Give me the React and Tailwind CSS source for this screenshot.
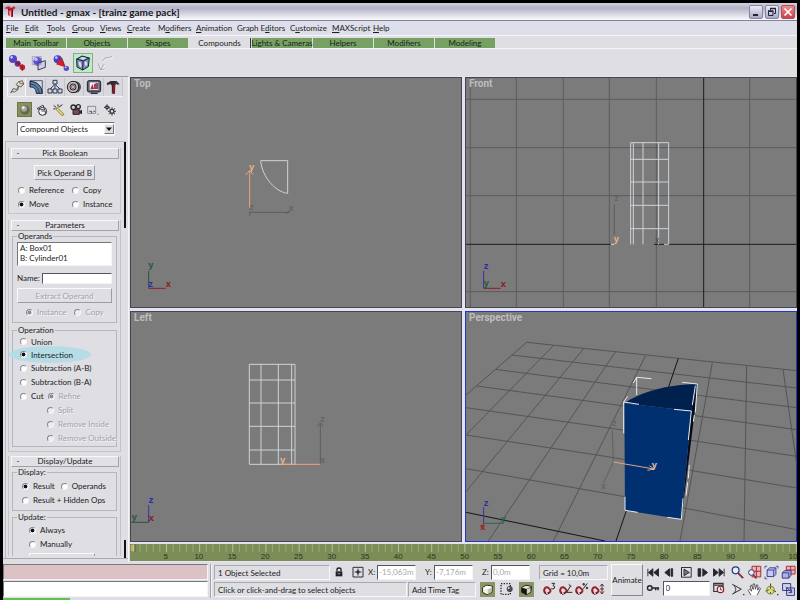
import React from "react";

/* ---------- shared controls ---------- */

function Radio({ label, name, checked = false, disabled = false, height = "h-[14px]" }) {
  return (
    <label
      className={`flex ${height} items-center gap-[4px] whitespace-nowrap ${
        disabled ? "text-[#a3a3ab] [text-shadow:1px_1px_0_#f4f4f8]" : "text-[#1c1c22]"
      }`}
    >
      <input
        type="radio"
        name={name}
        defaultChecked={checked}
        disabled={disabled}
        className="m-0 size-[7px] shrink-0 appearance-none rounded-full border border-t-[#85858d] border-l-[#85858d] border-r-[#f4f4f8] border-b-[#f4f4f8] bg-white checked:bg-[radial-gradient(circle,#111_0,#111_45%,#fff_65%)] disabled:bg-[#ececf1] disabled:checked:bg-[radial-gradient(circle,#8b8b93_0,#8b8b93_45%,#ececf1_65%)]"
      />
      {label}
    </label>
  );
}

function Rollout({ title, className = "", children }) {
  return (
    <section className={`mr-[3px] ml-[2px] border border-t-0 border-[#c3c3ca] ${className}`}>
      <button className="mx-[2px] grid h-[11px] w-[108px] grid-cols-[12px_1fr_12px] items-center border border-t-[#f8f8fb] border-l-[#f8f8fb] border-r-[#a2a2aa] border-b-[#a2a2aa] bg-[#e0e0e5]">
        <span className="leading-[9px]">-</span>
        <span className="text-center leading-[9px]">{title}</span>
      </button>
      {children}
    </section>
  );
}

function Group({ title, className = "", children }) {
  return (
    <fieldset className={`mx-[3px] min-w-0 border border-[#b6b6be] ${className}`}>
      <legend className="ml-[4px] px-[1px] leading-[10px]">{title}</legend>
      {children}
    </fieldset>
  );
}

function Icon({ size = "size-[16px]", children, className = "", box = "0 0 48 48" }) {
  return (
    <svg viewBox={box} className={`${size} shrink-0 ${className}`} fill="none" aria-hidden="true">
      {children}
    </svg>
  );
}

/* ---------- title, menu, tabs, toolbar ---------- */

function TitleBar() {
  const btn =
    "flex size-[14px] items-center justify-center rounded-[2px] border border-[#8484a4] bg-linear-to-b from-[#ececf6] to-[#a9a9c6]";
  return (
    <header className="flex h-[18px] items-center border-b border-[#83839e] bg-linear-to-b from-[#cfcfdd] via-[#b4b4c8] via-30% to-[#fafafc] pr-[2px] pl-[2px]">
      <Icon size="h-[14px] w-[12px]" box="0 0 36 42">
        <path d="M2 6L14 4L17 10L27 4L32 9L24 14L23 35L18 37L17 17L13 17L14 34L9 30L9 11L2 12Z" fill="#d3222b" />
        <path d="M17 10L23 14L22 35M9 12L14 15" stroke="#5c1218" strokeWidth="3" />
      </Icon>
      <h1 className="ml-[4px] text-[10px] leading-[14px] font-bold text-[#17171d]">
        Untitled - gmax - [trainz game pack]
      </h1>
      <div className="ml-auto flex gap-[2px]">
        <button aria-label="Minimize" className={btn}>
          <Icon size="size-[12px]" box="0 0 12 12"><path d="M3 9H8" stroke="#222238" strokeWidth="2" /></Icon>
        </button>
        <button aria-label="Restore" className={btn}>
          <Icon size="size-[12px]" box="0 0 12 12">
            <path d="M4.500 4V2.500H9.500V7.500H8M2.500 5.500H7V9.500H2.500Z" stroke="#222238" />
            <path d="M4 2.500H10M2 5H7.500" stroke="#222238" strokeWidth="1.500" />
          </Icon>
        </button>
        <button
          aria-label="Close"
          className="flex size-[14px] items-center justify-center rounded-[2px] border border-[#a4555f] bg-linear-to-b from-[#f08a8a] to-[#c8404c]"
        >
          <Icon size="size-[12px]" box="0 0 12 12"><path d="M2.500 2.500L9.500 9.500M9.500 2.500L2.500 9.500" stroke="#fff" strokeWidth="1.700" /></Icon>
        </button>
      </div>
    </header>
  );
}

const menus = [
  ["", "F", "ile", "w-[19px]"],
  ["", "E", "dit", "w-[22px]"],
  ["", "T", "ools", "w-[25px]"],
  ["", "G", "roup", "w-[28px]"],
  ["", "V", "iews", "w-[27px]"],
  ["", "C", "reate", "w-[31px]"],
  ["M", "o", "difiers", "w-[38px]"],
  ["", "A", "nimation", "w-[41px]"],
  ["Graph E", "d", "itors", "w-[53px]"],
  ["C", "u", "stomize", "w-[42px]"],
  ["", "M", "AXScript", "w-[41px]"],
  ["", "H", "elp", "w-[20px]"],
];

function MenuBar() {
  return (
    <nav className="flex h-[15px] items-center border-b border-[#f6f6fa] bg-[#dddfea] pl-[3px]">
      {menus.map(([a, u, b, w]) => (
        <button key={a + u + b} className={`${w} text-left whitespace-nowrap`}>
          {a}
          <span className="underline">{u}</span>
          {b}
        </button>
      ))}
    </nav>
  );
}

const tabs = ["Main Toolbar", "Objects", "Shapes", "Compounds", "Lights & Cameras", "Helpers", "Modifiers", "Modeling"];

function TabBar() {
  return (
    <div role="tablist" className="flex h-[13px] items-end gap-[1px] border-b border-[#f6f6fa] pl-[3px]">
      {tabs.map((t) => (
        <button
          key={t}
          role="tab"
          aria-selected={t === "Compounds"}
          className={`flex h-[10px] items-center justify-center leading-[10px] whitespace-nowrap ${
            t === "Compounds" ? "w-[62px] border-r border-[#34343a]" : "w-[60px] bg-[#77a163]"
          }`}
        >
          {t}
        </button>
      ))}
    </div>
  );
}

function Toolbar() {
  const b = "flex size-[20px] items-center justify-center";
  return (
    <div className="flex h-[27px] items-center gap-[2px] pl-[4px]">
      <button aria-label="Morph" className={b}>
        <Icon size="size-[18px]" box="0 0 54 54">
          <circle cx="15" cy="15" r="12" fill="#5046c4" /><circle cx="11" cy="10" r="4" fill="#c8c4fa" />
          <circle cx="29" cy="29" r="9" fill="#8a2c86" /><path d="M22 26L31 21L38 28L30 35Z" fill="#6d2360" />
          <path d="M35 34L43 30L51 35V45L43 50L35 44Z" fill="#c3222d" /><path d="M35 34L43 38V50" stroke="#6c1018" strokeWidth="2" />
        </Icon>
      </button>
      <button aria-label="Scatter" className={b}>
        <Icon size="size-[18px]" box="0 0 54 54">
          <circle cx="23" cy="22" r="13" fill="#5f54d0" /><circle cx="18" cy="16" r="5" fill="#c9c5fb" />
          <path d="M7 8H34V32H7Z" stroke="#8a88b8" strokeWidth="2" />
          <path d="M24 27L46 20V40L24 48Z" fill="#c8c4ee" fillOpacity=".5" stroke="#24243a" strokeWidth="2.500" />
        </Icon>
      </button>
      <button aria-label="Connect" className={b}>
        <Icon size="size-[18px]" box="0 0 54 54">
          <circle cx="17" cy="16" r="12" fill="#4a3fc0" /><circle cx="13" cy="11" r="4" fill="#c8c4fa" />
          <path d="M29 11L40 40L12 31Z" fill="#d0202b" /><path d="M29 11L40 40" stroke="#551018" strokeWidth="2" />
          <circle cx="43" cy="43" r="8" fill="#5548c8" /><circle cx="41" cy="40" r="3" fill="#c8c4fa" />
        </Icon>
      </button>
      <button aria-label="Boolean" className={`${b} border border-[#8fa896] bg-[#b8efc0]`}>
        <Icon size="size-[18px]" box="0 0 54 54">
          <path d="M8 15L24 6L46 12L43 38L26 48L9 39Z" fill="#8890bc" stroke="#1d1e3c" strokeWidth="3" />
          <path d="M8 15L27 21L26 48M27 21L46 12" stroke="#1d1e3c" strokeWidth="3" />
          <path d="M14 23Q23 22 22 39Q14 38 14 23ZM32 24Q40 18 39 33Q33 40 32 24Z" fill="#d9e6f2" />
          <path d="M17 13L27 9L37 13L27 17Z" fill="#d9e6f2" />
        </Icon>
      </button>
      <button aria-label="ShapeMerge" className={b} disabled>
        <Icon size="size-[18px]" box="0 0 54 54">
          <path d="M20 21C30 4 35 17 49 6M6 28L14 47L24 31M14 47L26 45" stroke="#fff" strokeWidth="3" transform="translate(2 2)" />
          <path d="M20 21C30 4 35 17 49 6M6 28L14 47L24 31M14 47L26 45" stroke="#a5a5ad" strokeWidth="3" />
        </Icon>
      </button>
    </div>
  );
}

/* ---------- command panel ---------- */

const panelTabs = [
  ["Create", <path key="p" d="M5 42L12 29L24 31L28 21L21 17L29 8L40 5L44 15L36 24L29 21L27 32L17 39L9 38ZM29 8L36 14L44 15" fill="#dad5b4" stroke="#55554f" strokeWidth="2.500" />],
  ["Modify", <g key="p"><path d="M6 7C28 7 42 23 43 43H25C24 29 18 24 6 24Z" fill="#5a82aa" stroke="#16223c" strokeWidth="3" /><path d="M6 15C21 16 32 25 34 43M5 5H43V43" stroke="#16223c" strokeWidth="2" /></g>],
  ["Hierarchy", <path key="p" d="M18 4H30V15H18ZM3 30H15V42H3ZM18 30H30V42H18ZM33 30H45V42H33ZM24 15V30M22 18L9 30M26 18L39 30" stroke="#2f3a54" strokeWidth="3" />],
  ["Motion", <g key="p"><circle cx="27" cy="24" r="18" fill="#4c4a4d" /><circle cx="21" cy="24" r="17" fill="#bcb8bc" stroke="#252528" strokeWidth="3" /><circle cx="21" cy="24" r="9" fill="#72595d" stroke="#2c2428" strokeWidth="3" /><path d="M21 15V33M12 24H30M15 18L27 30M27 18L15 30" stroke="#e2d9dc" strokeWidth="1.500" /></g>],
  ["Display", <g key="p"><rect x="4" y="5" width="40" height="34" rx="5" fill="#5d6474" stroke="#20222c" strokeWidth="3" /><path d="M11 10H37V33H11Z" fill="#f3eff2" /><path d="M13 31L19 15L24 31Z" fill="#b9202b" /><path d="M25 16L35 13V29H25Z" fill="#c03b44" stroke="#342a72" strokeWidth="2" /><path d="M14 43H35" stroke="#2a2c35" strokeWidth="4" /></g>],
  ["Utilities", <g key="p"><path d="M5 13L17 6H34L44 16L37 17L32 13V18H17V14L7 19Z" fill="#2f2c32" /><path d="M20 17H31L30 45H23Z" fill="#8b1d25" /><path d="M22 18V43" stroke="#302327" strokeWidth="3" /></g>],
];

const categories = [
  ["Geometry", <g key="c"><circle cx="21" cy="21" r="14" fill="#62665d" /><circle cx="18" cy="17" r="9" fill="#a3a79c" /><circle cx="16" cy="14" r="4" fill="#f2f2ee" /></g>],
  ["Shapes", <g key="c"><circle cx="23" cy="25" r="12" fill="#f6f6f8" stroke="#303036" strokeWidth="3" /><path d="M6 17L24 6L29 21Z M19 24H31V34" stroke="#303036" strokeWidth="2.500" /></g>],
  ["Lights", <g key="c"><path d="M16 14L36 34L30 38L12 19Z" fill="#ede057" stroke="#554f32" strokeWidth="2" /><path d="M5 7L13 14M18 4V11M4 18L10 17M20 13L31 5" stroke="#29292e" strokeWidth="3" /></g>],
  ["Cameras", <g key="c"><circle cx="13" cy="13" r="7" fill="#d2d0d2" stroke="#29292e" strokeWidth="4" /><circle cx="28" cy="11" r="6" fill="#d2d0d2" stroke="#29292e" strokeWidth="4" /><path d="M12 20H31V34H12Z" fill="#7c4d51" stroke="#242429" strokeWidth="3" /><path d="M31 24L39 20V34L31 30" fill="#242429" /></g>],
  ["Helpers", <g key="c"><path d="M5 10H29V31H5ZM34 34H39" stroke="#7e7e89" strokeWidth="2.500" /><path d="M10 25H17V31M22 25H27" stroke="#73414b" strokeWidth="3" /></g>],
  ["Systems", <g key="c" stroke="#303036"><circle cx="12" cy="13" r="4" strokeWidth="4" /><circle cx="27" cy="25" r="6" strokeWidth="4" /><path d="M12 4V8M12 18V22M3 13H7M17 13H21M27 13V18M27 32V38M15 25H20M34 25H39M18 16L22 20M32 30L36 34M36 16L32 20M22 30L18 34" strokeWidth="3" /></g>],
];

function CommandPanel() {
  return (
    <aside className="flex w-[126px] shrink-0 flex-col border-t border-r border-t-[#9a9aa4] border-r-[#f5f5f8]">
      <div role="tablist" className="mr-[5px] ml-[4px] flex h-[20px] border-b border-[#f4f4f8] pt-[1px]">
        {panelTabs.map(([name, art], i) => (
          <button
            key={name}
            role="tab"
            aria-label={name}
            aria-selected={i === 0}
            className={`flex h-[18px] w-[20px] items-center justify-center border-r ${
              i === 0 ? "border-l border-[#fafafd]" : "border-[#c4c4cb] bg-[#d8d8de]"
            }`}
          >
            <Icon>{art}</Icon>
          </button>
        ))}
      </div>
      <div className="mt-[5px] ml-[14px] flex gap-[2px]">
        {categories.map(([name, art], i) => (
          <button
            key={name}
            aria-label={name}
            className={`flex size-[15px] items-center justify-center ${i === 0 ? "border border-[#6d7448] bg-[#88915a]" : ""}`}
          >
            <Icon size="size-[14px]" box="0 0 42 42">{art}</Icon>
          </button>
        ))}
      </div>
      <div className="mt-[5px] ml-[14px] grid w-[98px] grid-cols-1 items-center border border-t-[#75757d] border-l-[#75757d] border-r-[#f4f4f8] border-b-[#f4f4f8] bg-white">
        <select aria-label="Object type" className="col-start-1 row-start-1 h-[12px] w-full appearance-none pl-[2px] leading-[12px]">
          <option>Compound Objects</option>
        </select>
        <span className="pointer-events-none col-start-1 row-start-1 flex h-[10px] w-[10px] items-center justify-center justify-self-end border border-t-[#f8f8fb] border-l-[#f8f8fb] border-r-[#76767e] border-b-[#76767e] bg-[#dedee3]">
          <Icon size="size-[6px]" box="0 0 6 6"><path d="M0 1.500H6L3 5Z" fill="#111" /></Icon>
        </span>
      </div>

      <div className="mt-[5px] mr-[2px] ml-[2px] flex min-h-0 flex-1 border-t border-l border-[#b9b9c1]">
        <div className="w-[118px] overflow-hidden pt-[6px]">
          <Rollout title="Pick Boolean" className="h-[66px]">
            <div className="flex justify-center pt-[6px]">
              <button className="h-[15px] w-[61px] border border-t-[#fafafd] border-l-[#fafafd] border-r-[#9c9ca4] border-b-[#9c9ca4]">
                Pick Operand B
              </button>
            </div>
            <div className="mt-[3px] grid grid-cols-[54px_1fr] pl-[9px]">
              <Radio name="pick" label="Reference" />
              <Radio name="pick" label="Copy" />
              <Radio name="pick" label="Move" checked />
              <Radio name="pick" label="Instance" />
            </div>
          </Rollout>

          <Rollout title="Parameters" className="mt-[6px] h-[232px]">
            <Group title="Operands" className="h-[92px]">
              <ul className="mx-[4px] mt-[1px] h-[24px] border border-t-[#75757d] border-l-[#75757d] border-r-[#f4f4f8] border-b-[#f4f4f8] bg-white pl-[2px]">
                <li className="leading-[10px]">A: Box01</li>
                <li className="leading-[10px]">B: Cylinder01</li>
              </ul>
              <label className="mx-[4px] mt-[6px] flex h-[12px] items-center gap-[2px]">
                Name:
                <input className="h-[11px] min-w-0 flex-1 border border-t-[#55555d] border-l-[#55555d] border-r-[#f4f4f8] border-b-[#f4f4f8] bg-white" />
              </label>
              <div className="mx-[4px] mt-[4px] flex">
                <button
                  disabled
                  className="h-[15px] flex-1 border border-t-[#fafafd] border-l-[#fafafd] border-r-[#9c9ca4] border-b-[#9c9ca4] text-[#a3a3ab] [text-shadow:1px_1px_0_#f4f4f8]"
                >
                  Extract Operand
                </button>
              </div>
              <div className="mt-[2px] flex gap-[8px] pl-[13px]">
                <Radio name="extract" label="Instance" checked disabled />
                <Radio name="extract" label="Copy" disabled />
              </div>
            </Group>
            <Group title="Operation" className="mt-[2px] h-[122px]">
              <div className="pl-[7px]">
                <Radio name="op" label="Union" height="h-[13px]" />
                <div className="-ml-[9px] w-[78px] rounded-[50%] bg-[#b6dce6] pl-[9px] shadow-[0_0_0_2px_#b6dce6]">
                  <Radio name="op" label="Intersection" checked height="h-[13px]" />
                </div>
                <Radio name="op" label="Subtraction (A-B)" />
                <Radio name="op" label="Subtraction (B-A)" />
                <div className="flex gap-[4px]">
                  <Radio name="op" label="Cut" />
                  <Radio name="cut" label="Refine" checked disabled />
                </div>
                <div className="pl-[27px]">
                  <Radio name="cut" label="Split" disabled />
                  <Radio name="cut" label="Remove Inside" disabled />
                  <Radio name="cut" label="Remove Outside" disabled />
                </div>
              </div>
            </Group>
          </Rollout>

          <Rollout title="Display/Update" className="mt-[4px] border-b-0">
            <Group title="Display:" className="h-[44px]">
              <div className="pt-[2px] pl-[9px]">
                <div className="flex gap-[6px]">
                  <Radio name="disp" label="Result" checked />
                  <Radio name="disp" label="Operands" />
                </div>
                <Radio name="disp" label="Result + Hidden Ops" />
              </div>
            </Group>
            <Group title="Update:" className="mt-[1px] border-b-0">
              <div className="pt-[1px] pl-[16px]">
                <Radio name="upd" label="Always" checked />
                <Radio name="upd" label="Manually" />
                <div className="mt-[2px] h-[3px] w-[66px] border border-b-0 border-t-[#fafafd] border-l-[#fafafd] border-r-[#9c9ca4]" />
              </div>
            </Group>
          </Rollout>
        </div>
        <div className="flex w-[2px] flex-col justify-between">
          <div className="h-[86px] bg-[#111114]" />
          <div className="h-[18px] bg-[#111114]" />
        </div>
      </div>
      <div className="h-[4px] border-t border-[#a9a9b1]" />
    </aside>
  );
}

/* ---------- viewports ---------- */

function Viewport({ title, box, active = false, children }) {
  return (
    <section
      className={`grid min-h-0 min-w-0 overflow-hidden border bg-[#7b7b7b] ${active ? "border-[#2536c4]" : "border-[#45454f]"}`}
    >
      <h2 className="z-10 col-start-1 row-start-1 h-[12px] pl-[3px] font-['Roboto'] text-[10px] leading-[12px] font-bold text-[#bebebe]">
        {title}
      </h2>
      <svg
        viewBox={box}
        preserveAspectRatio="xMidYMid slice"
        className="col-start-1 row-start-1 h-full w-full [&_line]:[vector-effect:non-scaling-stroke] [&_path]:[vector-effect:non-scaling-stroke]"
        fill="none"
        fontFamily="Liberation Sans"
        fontSize="28"
        fontWeight="bold"
      >
        {children}
      </svg>
    </section>
  );
}

function TopView() {
  return (
    <Viewport title="Top" box="3 9 990 687">
      <path d="M392 257H473V355C440 352 397 310 392 257Z" stroke="#cdd3d8" />
      <path d="M359 422V412H479M470 417L482 403" stroke="#5c5c5c" />
      <text x="358" y="406" fill="#5c5c5c" fontWeight="normal">z</text>
      <text x="476" y="409" fill="#5c5c5c" fontWeight="normal">x</text>
      <path d="M359 398V290M347 300L359 286L370 299" stroke="#efa27c" />
      <text x="357" y="284" fill="#f3b08e">y</text>
      <path d="M56 640V588" stroke="#1f5a35" />
      <path d="M56 640H107" stroke="#8b2028" />
      <text x="55" y="580" fill="#1f5a35">y</text>
      <text x="55" y="635" fill="#2d2da8">z</text>
      <text x="107" y="635" fill="#8b1820">x</text>
    </Viewport>
  );
}

function FrontView() {
  return (
    <Viewport title="Front" box="18 9 990 687">
      <path
        d="M31 9V696M169 9V696M310 9V696M448 9V696M589 9V696M869 9V696M18 73H1010M18 218H1010M18 362H1010M18 650H1010"
        stroke="#5c5c5c"
      />
      <path d="M731 9V696M18 508H452M582 508H1010" stroke="#1d1d1d" />
      <path
        d="M512 508V203H626V508M520 203V508M549 203V508M596 203V508M512 253H626M512 321H626M512 391H626M512 461H626M612 508H626"
        stroke="#cdd3d8"
      />
      <path d="M463 480V388" stroke="#5c5c5c" />
      <text x="463" y="377" fill="#5c5c5c" fontWeight="normal">z</text>
      <text x="585" y="504" fill="#4a4a4a" fontWeight="normal">x</text>
      <text x="461" y="501" fill="#f3b08e">y</text>
      <path d="M453 508H463" stroke="#efd0bd" />
      <path d="M71 640V588" stroke="#3434a4" />
      <path d="M71 640H122" stroke="#8b2028" />
      <text x="71" y="581" fill="#2d2da8">z</text>
      <text x="71" y="634" fill="#1f5a35">y</text>
      <text x="122" y="635" fill="#8b1820">x</text>
    </Viewport>
  );
}

function LeftView() {
  return (
    <Viewport title="Left" box="3 711 990 687">
      <path
        d="M358 868H495V1168H358ZM393 868V1168M445 868V1168M485 868V1168M358 915H495M358 984H495M358 1054H495M358 1125H495"
        stroke="#cdd3d8"
      />
      <path d="M571 1166V1046M562 1054L571 1044L580 1054" stroke="#5c5c5c" />
      <text x="571" y="1040" fill="#5c5c5c" fontWeight="normal">z</text>
      <text x="571" y="1165" fill="#5c5c5c" fontWeight="normal">x</text>
      <path d="M448 1168H571" stroke="#f0a079" />
      <text x="450" y="1164" fill="#f3b08e">y</text>
      <path d="M56 1342V1290" stroke="#3434a4" />
      <path d="M56 1342H5" stroke="#1f5a35" />
      <text x="56" y="1284" fill="#2d2da8">z</text>
      <text x="56" y="1337" fill="#8b1820">x</text>
      <text x="5" y="1336" fill="#1f5a35">y</text>
    </Viewport>
  );
}

function PerspectiveView() {
  return (
    <Viewport title="Perspective" box="18 21 990 687" active>
      <path
        d="M200 112L655 160L1010 197M155 150L645 207L1010 249M105 193L620 259L1010 308M50 243L500 304L1010 374M18 308L460 371L1010 454M18 390L430 453L1010 549M18 491L500 576L1010 674M200 112L18 270M280 122L20 388M371 131L18 560M466 141L85 708M557 151L280 708M757 173L660 708M860 183L852 708M969 193L1009 470"
        stroke="#555"
      />
      <path d="M655 160L468 708M18 622L435 708" stroke="#151515" />
      <path d="M694 318L712 238L703 330L664 643Z" fill="#050b1a" />
      <path d="M493 295C540 262 620 238 712 238L694 318Z" fill="#00204e" />
      <path d="M493 295L694 318L664 643L495 616Z" fill="#00306f" />
      <path
        d="M530 270V217L574 221M530 217L520 234M491 385V291L503 274M491 291L537 298M667 232L712 237L706 322M642 313L694 318L685 405M706 242L697 300M495 575V616L533 622M664 643L622 637M664 643L669 580M703 330L700 350M688 480L685 520M683 532L678 572"
        stroke="#e6e9ee"
      />
      <path d="M457 375L460 471L430 535" stroke="#606060" />
      <text x="457" y="364" fill="#5c5c5c" fontWeight="normal">z</text>
      <text x="423" y="551" fill="#5c5c5c" fontWeight="normal">x</text>
      <path d="M460 471L582 492M568 482L582 492L562 496" stroke="#dfa284" />
      <text x="575" y="490" fill="#f2c3ad">y</text>
      <path d="M71 655V607" stroke="#3434a4" />
      <path d="M71 655H122" stroke="#1f6a45" />
      <path d="M71 655L62 668" stroke="#a02028" />
      <text x="71" y="603" fill="#2d2da8">z</text>
      <text x="122" y="650" fill="#1f6a45">y</text>
      <text x="61" y="676" fill="#a01820">x</text>
    </Viewport>
  );
}

function Timeline() {
  const ticks = Array.from({ length: 101 }, (_, i) => i);
  const labels = Array.from({ length: 19 }, (_, i) => (i + 1) * 5);
  return (
    <div className="flex h-[17px] flex-col bg-[#7c8d58] text-[#2e3521]">
      <svg className="h-[8px] w-full shrink-0" aria-hidden="true">
        <rect x="0" y="0" width="5" height="8" fill="#b9b56a" stroke="#5f6136" />
        {ticks.map((i) => (
          <line key={i} x1={`${0.5 + i * 0.994}%`} x2={`${0.5 + i * 0.994}%`} y1="0" y2="8" stroke={i % 5 ? "#9ba979" : "#b7c196"} />
        ))}
      </svg>
      <div className="flex overflow-hidden pl-[19px] font-['Liberation_Sans'] text-[8px] leading-[9px]">
        {labels.map((n) => (
          <span key={n} className="min-w-0 flex-1 text-center">{n}</span>
        ))}
        <span className="min-w-0 flex-[0.5]">
          <span className="block pl-[8px]">10</span>
        </span>
      </div>
    </div>
  );
}

/* ---------- status bar ---------- */

const sunken = "border border-t-[#a9a9b2] border-l-[#a9a9b2] border-r-[#f8f8fb] border-b-[#f8f8fb]";

function Coord({ axis, value }) {
  return (
    <label className="flex items-center gap-[1px]">
      <span className="w-[8px]">{axis}:</span>
      <input
        defaultValue={value}
        className="h-[15px] w-[39px] border border-t-[#55555d] border-l-[#55555d] border-r-[#f4f4f8] border-b-[#f4f4f8] bg-white pl-[1px] text-[#a8a8b0]"
      />
    </label>
  );
}

function Magnet({ name, children }) {
  return (
    <button aria-label={name}>
      <Icon>
        <path d="M11 37C2 29 8 17 17 19L22 23M17 37C28 34 27 27 22 23" stroke="#9f1f29" strokeWidth="6" />
        <path d="M9 36L15 41M17 40L23 35" stroke="#2b1c20" strokeWidth="3" />
        {children}
      </Icon>
    </button>
  );
}

const playback = [
  ["Go to start", "M6 12V36M22 12V36L8 24ZM40 12V36L25 24Z"],
  ["Previous frame", "M24 12V36L9 24ZM29 12V36H34V12Z"],
  ["Play", "M8 8H39V39H8ZM8 8V39"],
  ["Next frame", "M25 12V36L40 24ZM10 12V36H18V12Z"],
  ["Go to end", "M42 12V36M26 12V36L40 24ZM8 12V36L23 24Z"],
];

function Cube({ light = false }) {
  return (
    <Icon size="size-[13px]" box="0 0 42 42">
      <path d="M5 15L19 7L37 11L35 30L20 38L5 30Z" fill={light ? "#f4f2e8" : "#15170f"} stroke="#24261c" strokeWidth="3" />
      <path d="M6 15L19 9L36 12L22 19Z" fill={light ? "#fff" : "#e7e7de"} />
      <path d="M22 20L34 15V29L22 36Z" fill={light ? "#c2c2b0" : "#d5d7c8"} />
    </Icon>
  );
}

const navigation = [
  ["Zoom", <g key="n"><circle cx="18" cy="17" r="11" fill="#e7eefb" stroke="#24387c" strokeWidth="4" /><path d="M26 26L42 42" stroke="#882b38" strokeWidth="6" /></g>],
  ["Zoom All", <g key="n"><path d="M16 4H44V38H16ZM30 4V38M16 20H44" fill="#e9b5b8" stroke="#a52630" strokeWidth="3" /><circle cx="14" cy="24" r="9" fill="#eef" stroke="#30305c" strokeWidth="3" /><path d="M20 31L30 43" stroke="#8d2f3b" strokeWidth="5" /></g>],
  ["Zoom Extents", <g key="n"><path d="M10 16L18 9H38V30L31 37H10ZM10 16H31V37M31 16L38 9" fill="#c6c8ef" stroke="#343b98" strokeWidth="3" /><path d="M3 11V4H10M38 4H45V11M3 37V44H10" stroke="#343b98" strokeWidth="2.500" /></g>],
  ["Zoom Extents All", <g key="n"><path d="M17 4H45V29H17ZM31 4V29M17 16H45" fill="#e9b5b8" stroke="#a52630" strokeWidth="3" /><path d="M4 25L12 18H32V33L25 42H4ZM4 25H25V42" fill="#aeb1e5" stroke="#343b88" strokeWidth="3" /></g>],
  ["Field of View", <g key="n"><path d="M7 7L36 23L7 39M13 12C20 20 20 28 13 35" stroke="#242429" strokeWidth="3" /><path d="M42 40H46" stroke="#242429" strokeWidth="4" /></g>],
  ["Pan", <path key="n" d="M13 42L4 27L8 23L15 29L10 13L14 10L20 24L19 7L24 6L27 23L31 9L35 11L34 26L40 18L43 21L35 37L32 42" fill="#fff" stroke="#303036" strokeWidth="2.500" />],
  ["Arc Rotate", <g key="n"><path d="M21 5V38M5 29L21 24L38 31" stroke="#2b2e22" strokeWidth="3" /><circle cx="21" cy="26" r="12" stroke="#8c9420" strokeWidth="4" /><path d="M14 27L21 21L29 27L21 33Z" fill="#f3e324" /><path d="M42 40H46" stroke="#242429" strokeWidth="4" /></g>],
  ["Min/Max Toggle", <path key="n" d="M5 5H31V27H5ZM18 19H43V43H18ZM16 15L34 33M34 24V34H24" fill="#c6c8ef" fillOpacity=".6" stroke="#2d3184" strokeWidth="3" />],
];

function StatusBar() {
  return (
    <footer className="flex h-[36px] bg-[#dedee3] pt-[2px]">
      <div className="flex w-[205px] shrink-0 flex-col gap-[1px]">
        <input aria-label="Macro recorder" className="h-[16px] border border-t-[#77777f] border-l-[#77777f] border-r-[#f4f4f8] border-b-[#f4f4f8] bg-[#dcc1c5]" />
        <input aria-label="Listener" className="h-[16px] border border-t-[#77777f] border-l-[#77777f] border-r-[#f4f4f8] border-b-[#f4f4f8] bg-white" />
      </div>
      <div className="mx-[2px] w-[2px] shrink-0 border-l border-[#a2a2aa] bg-[#f6f6fa]" />
      <div className="flex w-[394px] shrink-0 flex-col gap-[1px]">
        <div className="flex h-[16px] items-center">
          <output className={`h-[15px] w-[116px] pl-[3px] leading-[14px] ${sunken}`}>1 Object Selected</output>
          <button aria-label="Lock selection" className="ml-[3px]">
            <Icon size="size-[12px]" box="0 0 36 36">
              <path d="M8 16H28V31H8Z" fill="#222226" />
              <path d="M12 16V11Q12 6 18 6Q24 6 24 11V16" stroke="#222226" strokeWidth="4" />
              <path d="M14 23H22" stroke="#8f8f98" strokeWidth="3" />
            </Icon>
          </button>
          <button aria-label="Absolute mode" className="ml-[7px]">
            <Icon size="size-[12px]" box="0 0 36 36">
              <path d="M3 4H33V33H3ZM18 8V29M8 18H28" stroke="#2e2e34" strokeWidth="3" />
              <circle cx="18" cy="18" r="5" fill="#2e2e34" />
            </Icon>
          </button>
          <div className="ml-[4px] flex gap-[9px]">
            <Coord axis="X" value="-15,063m" />
            <Coord axis="Y" value="-7,176m" />
            <Coord axis="Z" value="0,0m" />
          </div>
          <output className={`ml-[9px] h-[15px] flex-1 pl-[3px] leading-[14px] ${sunken}`}>Grid = 10,0m</output>
        </div>
        <div className="flex h-[16px] items-center">
          <output className={`h-[15px] w-[193px] pl-[3px] leading-[14px] ${sunken}`}>Click or click-and-drag to select objects</output>
          <button className={`ml-[1px] h-[15px] w-[68px] pl-[3px] text-left leading-[14px] ${sunken}`}>Add Time Tag</button>
          <button aria-label="Degradation override" className="ml-[4px] flex size-[15px] items-center justify-center bg-[#8b9464]"><Cube light /></button>
          <button aria-label="Crossing selection" className="ml-[4px]">
            <Icon>
              <path d="M6 8H34V40H6Z" stroke="#26262b" strokeWidth="4" strokeDasharray="4 4" />
              <circle cx="32" cy="24" r="9" fill="#4b4b57" /><circle cx="29" cy="21" r="3" fill="#d6d6de" />
            </Icon>
          </button>
          <button aria-label="Window selection" className="ml-[4px] flex size-[15px] items-center justify-center bg-[#8b9464]"><Cube /></button>
          <div className="mr-[2px] ml-auto flex">
            <Magnet name="3D snap"><path d="M29 7H38L33 14Q41 15 37 22Q33 26 28 22" stroke="#26262b" strokeWidth="3" /></Magnet>
            <Magnet name="Angle snap"><path d="M38 14L26 34H43M32 10L40 17" stroke="#26262b" strokeWidth="3" /></Magnet>
            <Magnet name="Percent snap"><path d="M40 7L28 23M27 8H31V12H27ZM37 19H41V23H37Z" stroke="#26262b" strokeWidth="3" /></Magnet>
            <Magnet name="Spinner snap"><path d="M36 9V39M30 16L36 9L42 16M30 31L36 39L42 31M30 24H42" stroke="#6a2d33" strokeWidth="3" /></Magnet>
          </div>
        </div>
      </div>
      <button className="mx-[3px] h-[32px] w-[32px] shrink-0 border border-t-[#fafafd] border-l-[#fafafd] border-r-[#85858d] border-b-[#85858d] text-center">
        Animate
      </button>
      <div className="flex w-[80px] shrink-0 flex-col">
        <div className="flex h-[16px] items-center justify-between">
          {playback.map(([name, d]) => (
            <button key={name} aria-label={name}>
              <Icon size="size-[15px]">
                <path d={d} stroke="#26262b" strokeWidth="3" fill={name === "Play" ? "none" : "#26262b"} />
                {name === "Play" && <path d="M16 13V34L33 24Z" fill="#77777f" stroke="#26262b" strokeWidth="3" />}
              </Icon>
            </button>
          ))}
        </div>
        <div className="flex h-[16px] items-center justify-between">
          <button aria-label="Key mode">
            <Icon size="size-[14px]">
              <circle cx="13" cy="24" r="8" stroke="#26262b" strokeWidth="5" />
              <path d="M20 24H45M33 24V32M41 24V32" stroke="#26262b" strokeWidth="5" />
            </Icon>
          </button>
          <input
            aria-label="Current frame"
            defaultValue="0"
            className="h-[15px] w-[47px] border border-t-[#55555d] border-l-[#55555d] border-r-[#f4f4f8] border-b-[#f4f4f8] bg-white pl-[2px]"
          />
          <button aria-label="Time configuration">
            <Icon size="size-[14px]">
              <path d="M6 8H38V36H6ZM6 14H38" stroke="#343438" strokeWidth="4" />
              <circle cx="29" cy="29" r="11" fill="#f5e6e6" stroke="#7d2028" strokeWidth="4" />
              <path d="M29 22V30H35" stroke="#7d2028" strokeWidth="3" />
            </Icon>
          </button>
        </div>
      </div>
      <div className="ml-[4px] grid shrink-0 grid-cols-4 gap-x-[2px]">
        {navigation.map(([name, art]) => (
          <button key={name} aria-label={name} className="flex h-[16px] w-[15px] items-center justify-center">
            <Icon size="size-[15px]">{art}</Icon>
          </button>
        ))}
      </div>
    </footer>
  );
}

/* ---------- window ---------- */

export default function App() {
  return (
    <div className="flex min-h-screen flex-col bg-black pt-[3px] pr-[3px] pl-[3px] font-['Lato','Liberation_Sans',sans-serif] text-[8px] leading-[12px] text-[#1c1c22]">
      <div className="flex flex-1 flex-col bg-[#dedee3]">
        <TitleBar />
        <MenuBar />
        <TabBar />
        <Toolbar />
        <main className="flex flex-1">
          <CommandPanel />
          <div className="ml-[1px] flex min-w-0 flex-1 flex-col bg-[#e4e4f0] pt-[1px]">
            <div className="grid flex-1 grid-cols-2 grid-rows-2 gap-[3px]">
              <TopView />
              <FrontView />
              <LeftView />
              <PerspectiveView />
            </div>
            <div className="mt-[2px] mb-[1px]">
              <Timeline />
            </div>
          </div>
        </main>
        <StatusBar />
      </div>
      <div className="flex h-[2px] bg-[#dcdcea]">
        <div className="w-[67px] bg-[#5fc24a]" />
      </div>
    </div>
  );
}
